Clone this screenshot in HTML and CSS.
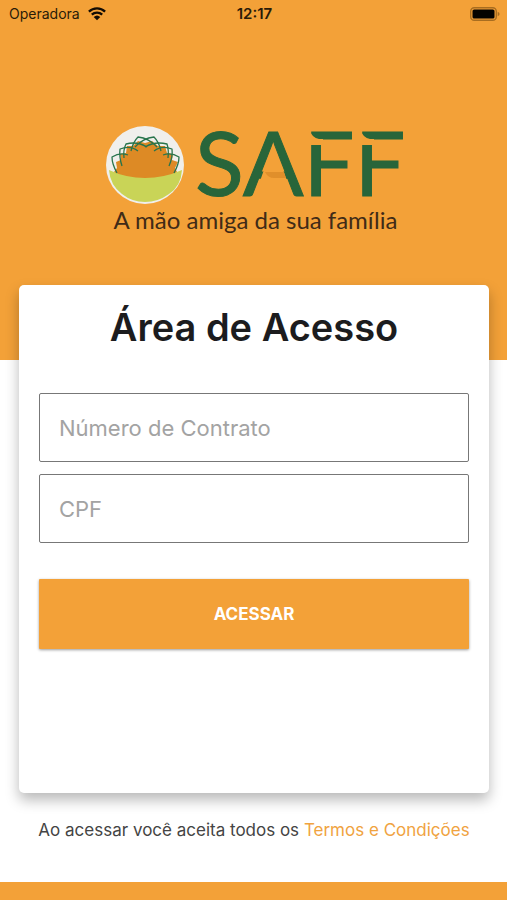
FILE: index.html
```html
<!DOCTYPE html>
<html lang="pt-BR">
<head>
  <meta charset="utf-8">
  <meta name="viewport" content="width=device-width, initial-scale=1">
  <title>SAFF - Área de Acesso</title>
  <link rel="stylesheet" href="styles.css">
</head>
<body>
  <header class="hero">
    <div class="status">
      <div class="carrier">
        <span>Operadora</span>
        <svg class="wifi" viewBox="0 0 20 15" width="20" height="15" aria-hidden="true">
          <path d="M1.9 5.6A11.8 11.8 0 0 1 18.1 5.6M4.8 8.6A7.6 7.6 0 0 1 15.2 8.6" fill="none" stroke="#120c04" stroke-width="2.3"/>
          <path d="M10 14.3L6.7 11A4.8 4.8 0 0 1 13.3 11Z" fill="#120c04"/>
        </svg>
      </div>
      <time class="clock">12:17</time>
      <svg class="battery" viewBox="0 0 30 14" width="30" height="14" aria-hidden="true">
        <rect x="0.7" y="0.7" width="25.6" height="12.6" rx="3.6" fill="none" stroke="#a86d20" stroke-width="1.4"/>
        <rect x="2.5" y="2.5" width="22" height="9" rx="1.6" fill="#050300"/>
        <path d="M27.7 4.8Q29.6 5.5 29.6 7T27.7 9.2Z" fill="#a86d20"/>
      </svg>
    </div>
    <div class="brand">
      <svg class="logo" viewBox="0 0 296 78" width="296" height="78" role="img" aria-label="SAFF">
        <circle cx="39" cy="39" r="39" fill="#f0efec"/>
        <!-- flower -->
        <path d="M39 17L46 15 52 20 59 20 61 27 67 28 66 34 72 36 69 42 71 46 64 54H15L8 46 11 42 10 36 15 34 14 28 20 27 21 20 27 20 32 15Z" fill="#dd8a25"/>
        <!-- bowl -->
        <path d="M3 44Q20 52 39 52T76 44Q75 60 63 68Q52 76 39 76T16 68Q4 59 3 44Z" fill="#c9d457"/>
        <!-- petals -->
        <g fill="none" stroke="#28744c" stroke-width="1.3" stroke-linejoin="round">
          <path d="M25 25Q27 16 32 11Q43 12 51 21"/>
          <path d="M55 25Q53 16 48 11Q37 12 29 21"/>
          <path d="M18 32Q17 24 20 18Q31 15 41 21"/>
          <path d="M62 32Q63 24 61 18Q49 15 39 21"/>
          <path d="M16 40Q13 31 14 23Q24 19 32 25"/>
          <path d="M63 40Q67 31 66 23Q56 19 48 25"/>
          <path d="M11 47Q6 38 6 31Q14 26 22 29"/>
          <path d="M68 47Q73 38 73 31Q65 26 57 29"/>
        </g>
        <text class="wordmark" x="89" y="70">SAFF</text>
        <!-- open A and split stems of the two Fs -->
        <path d="M154 55L159 41H176L181 55Z" fill="#f3a138"/>
        <path d="M159 46H178L180 52H168Q162 52 159 46Z" fill="#e08f2b"/>
        <path d="M203 3V19H217V13H213Q206 12 203 3ZM254 3V19H268V13H264Q257 12 254 3Z" fill="#f3a138"/>
      </svg>
      <p class="tagline">A mão amiga da sua família</p>
    </div>
  </header>
  <main class="content">
    <form class="card">
      <h1 class="title">Área de Acesso</h1>
      <div class="fields">
        <input class="field" type="text" aria-label="Número de Contrato" placeholder="Número de Contrato">
        <input class="field" type="text" inputmode="numeric" aria-label="CPF" placeholder="CPF">
      </div>
      <button class="submit" type="submit">ACESSAR</button>
    </form>
    <p class="terms">Ao acessar você aceita todos os <a href="#termos">Termos e Condições</a></p>
  </main>
  <footer class="strip"></footer>
</body>
</html>
```

FILE: styles.css
```css
* { box-sizing: border-box; }

body {
  margin: 0;
  min-height: 100vh;
  display: flex;
  flex-direction: column;
  background: #fff;
  font-family: Inter, "Liberation Sans", sans-serif;
}

.hero {
  height: 360px;
  background: #f3a138;
}

.status {
  display: grid;
  grid-template-columns: 1fr auto 1fr;
  align-items: center;
  height: 27px;
  padding: 0 7px 0 9px;
  font-size: 14px;
  color: #2a1b08;
}

.carrier {
  display: flex;
  align-items: center;
  gap: 7px;
}

.clock {
  font-size: 15px;
  font-weight: 600;
}

.battery {
  justify-self: end;
}

.brand {
  display: flex;
  flex-direction: column;
  align-items: center;
  padding-top: 99px;
}

.logo {
  display: block;
  overflow: visible;
}

.wordmark {
  font-family: Lato, sans-serif;
  font-size: 90px;
  fill: #28653a;
  stroke: #28653a;
  stroke-width: 1px;
}

.tagline {
  width: 296px;
  margin: 0;
  padding-left: 8px;
  font-family: Lato, sans-serif;
  font-size: 24px;
  line-height: 32px;
  white-space: nowrap;
  color: #402b17;
}

.content {
  flex: 1;
  display: flex;
  flex-direction: column;
  margin: -75px 18px 0 19px;
}

.card {
  flex: 1;
  padding: 20px 20px 24px;
  border-radius: 5px;
  background: #fff;
  box-shadow: 0 7px 14px rgba(0, 0, 0, 0.28);
}

.title {
  margin: 0 0 44px;
  font-size: 38px;
  line-height: 44px;
  font-weight: 600;
  text-align: center;
  color: #1c1c1e;
}

.fields {
  display: flex;
  flex-direction: column;
  gap: 12px;
  margin-bottom: 36px;
}

.field {
  width: 100%;
  height: 69px;
  padding: 0 19px;
  border: 1px solid #777;
  border-radius: 2px;
  background: #fff;
  font: inherit;
  font-size: 22px;
  color: #222;
}

.field::placeholder {
  color: #a3a3a3;
  opacity: 1;
}

.submit {
  width: 100%;
  height: 70px;
  border: 0;
  border-radius: 1px;
  background: #f3a138;
  box-shadow: 0 1px 3px rgba(0, 0, 0, 0.4);
  font: inherit;
  font-size: 17px;
  font-weight: 700;
  color: #fff;
}

.terms {
  margin: 0;
  padding: 25px 0 40px;
  font-size: 17px;
  line-height: 24px;
  text-align: center;
  color: #444;
}

.terms a {
  color: #f0a33f;
  text-decoration: none;
}

.strip {
  height: 18px;
  background: #f3a138;
}
```
